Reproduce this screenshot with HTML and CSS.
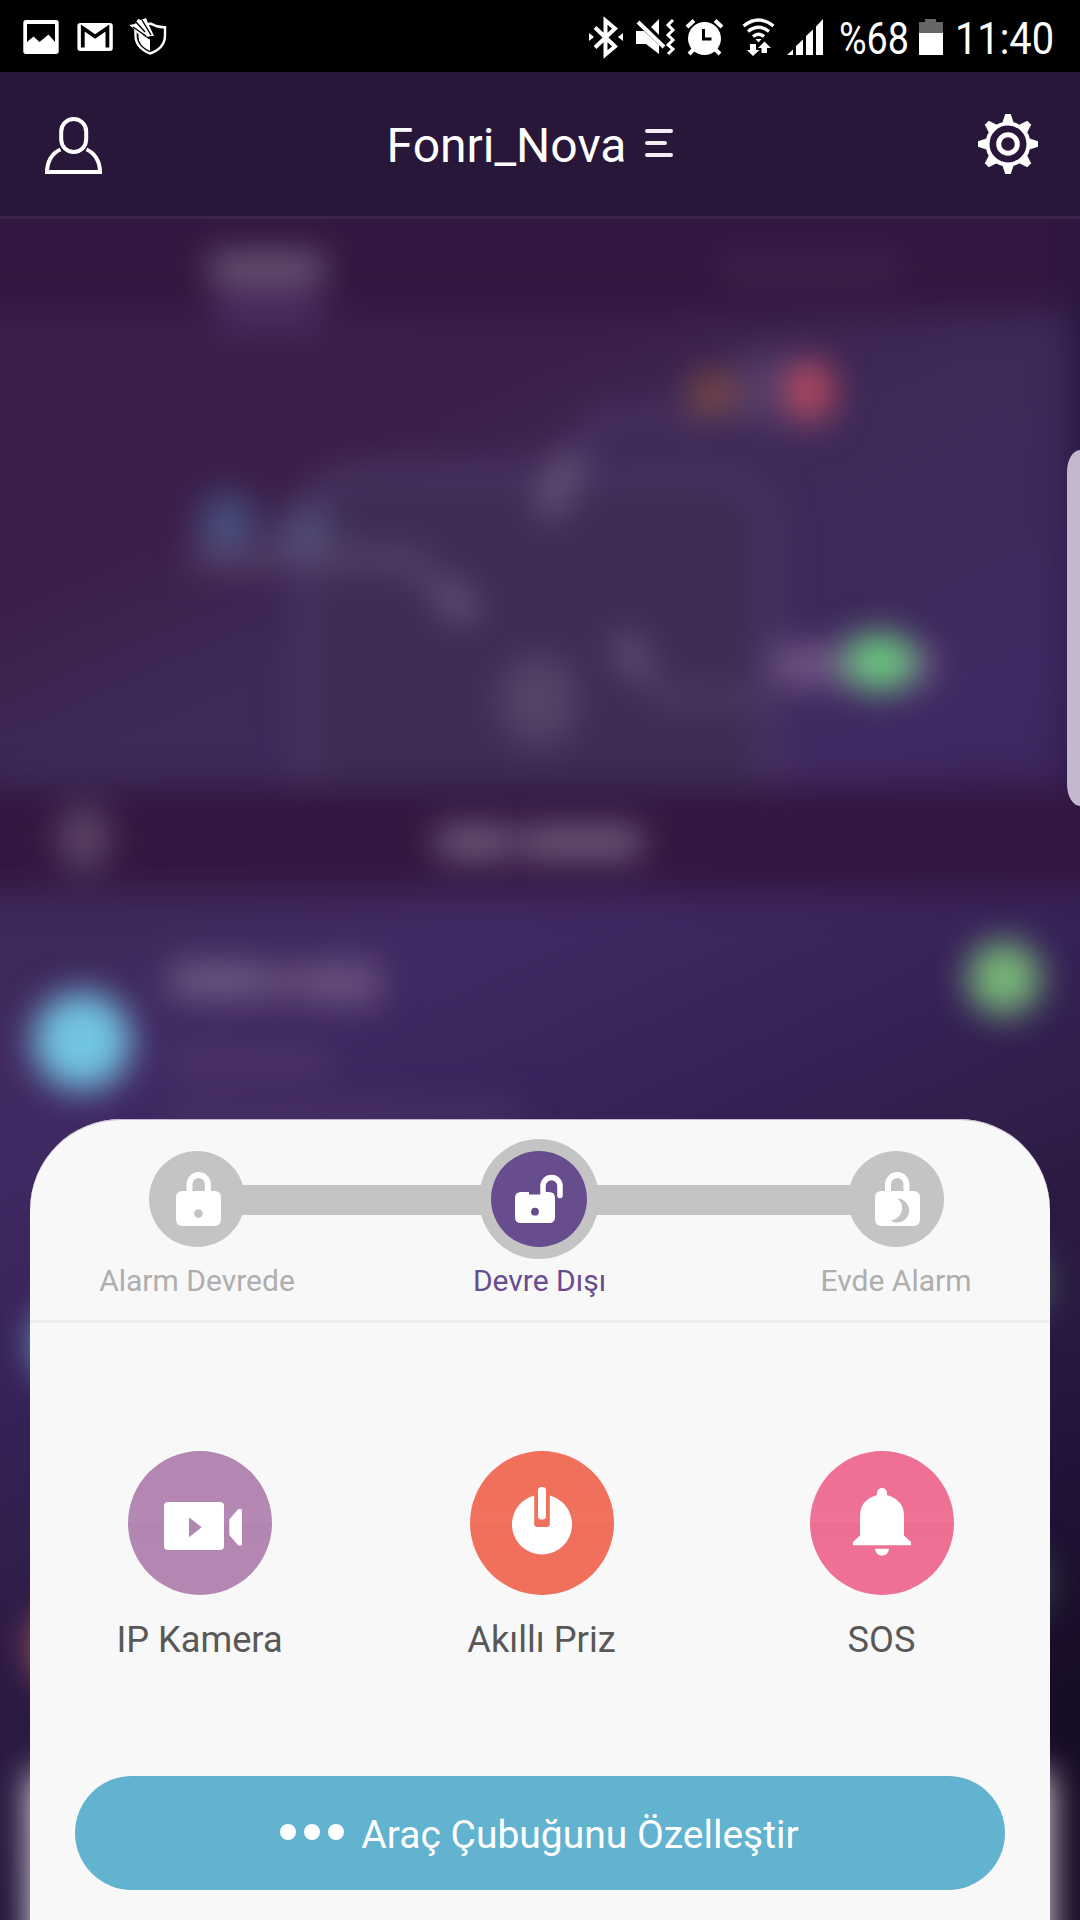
FILE: index.html
```html
<!DOCTYPE html>
<html lang="tr">
<head>
<meta charset="utf-8">
<meta name="viewport" content="width=1080">
<title>Fonri_Nova</title>
<link rel="stylesheet" href="styles.css">
</head>
<body>
<div class="screen">
  <header class="status">
    <div class="status-left">
      <svg class="ic" width="36" height="36" viewBox="23 19 36 36"><path fill-rule="evenodd" d="M26 20h30q2.700 0 2.700 2.700v28.600q0 2.700-2.700 2.700h-30q-2.700 0-2.700-2.700v-28.600q0-2.700 2.700-2.700zM27 24v18l6.500-5.500 6 5.500 9-7.500 6.500 7.500v-18z"/></svg>
      <svg class="ic" width="36" height="36" viewBox="77 19 36 36"><rect x="77.400" y="23" width="35.400" height="28" rx="3"/><path d="M82.800 47.500V28l12.300 8.500 12.300-8.500v19.500" fill="none" stroke="#000" stroke-width="3.800"/></svg>
      <svg class="ic shield" width="40" height="40" viewBox="128 17 40 40"><path d="M135.500 27q8 0 14.500-3.500 3 1 6 2.500 4 1.300 9 1.200v8q0 13-15 18.300-14.500-6-14.500-18z" fill="#000" stroke="#fff" stroke-width="2.400"/><path d="M138.500 30q7 0 11.500-3v24q-11.500-5.500-11.500-14z"/><path d="M130 23l21 14M140 18l13 20" fill="none" stroke="#000" stroke-width="6"/><path d="M129 25l6-1 3-5 3 1 5-2 2 5 6 13-4 0-2 1-5-2-5-1-5-6z"/><path d="M133 27l13 9M142 20l9 15M136 22l9 10" fill="none" stroke="#000" stroke-width="1.400"/></svg>
    </div>
    <div class="status-right">
      <svg class="ic bt" width="34" height="40" viewBox="589 17 34 40"><path d="M595 27.500l20 19-9.500 8v-34l9.500 8-20 19" fill="none" stroke="#fff" stroke-width="4"/><path d="M589 33l5 4-5 4zM623 33l-5 4 5 4z"/></svg>
      <svg class="ic mute" width="40" height="40" viewBox="636 17 40 40"><path d="M636 31h8l15 14v9l-13-10h-10zM659 19v16l-8-8z"/><path d="M638 22l26 25" fill="none" stroke="#fff" stroke-width="4"/><path d="M673 20l-5 5 5 5-5 5 5 5-5 5 5 4-5 5" fill="none" stroke="#fff" stroke-width="3"/></svg>
      <svg class="ic alarm" width="37" height="40" viewBox="686 17 37 40"><circle cx="704.500" cy="38.500" r="16.500"/><path d="M687 27l7-6.500M722 27l-7-6.500M689 54l6-6M720 54l-6-6" stroke="#fff" stroke-width="4" fill="none"/><path d="M703.500 29v10h8" stroke="#000" stroke-width="3" fill="none"/></svg>
      <svg class="ic wifi" width="34" height="40" viewBox="742 17 34 40"><path d="M743.500 26q15-12 30 0M748 31.500q10.500-8.500 21 0M753 36.500q5.500-4.500 11 0" fill="none" stroke="#fff" stroke-width="3.200"/><path d="M755.500 39h6l-3 3.500zM750 44h6v6h3.500l-6.500 6-6-6h3zM761.500 53v-5h-3.500l6.500-6.500 6.500 6.500h-4v5z"/></svg>
      <svg class="ic signal" width="37" height="40" viewBox="787 17 37 40"><path d="M787 55l6-5.500v5.500zM796 55v-9l7-6.500v15.500zM806 55v-19l7-6.500v25.500zM816 55v-28.500l7-7.500v36z"/></svg>
      <svg class="ic pct" width="72" height="72" viewBox="838 0 72 72"><text class="status-text" x="839" y="54" textLength="70" lengthAdjust="spacingAndGlyphs">%68</text></svg>
      <svg class="ic battery" width="24" height="40" viewBox="919 17 24 40"><path d="M919 33v-11h6v-3h11v3h7v11z" fill="#666"/><path d="M919 33h24v22h-24z"/></svg>
      <svg class="ic clock" width="102" height="72" viewBox="953 0 102 72"><text class="status-text" x="955" y="54" textLength="99" lengthAdjust="spacingAndGlyphs">11:40</text></svg>
    </div>
  </header>

  <nav class="topbar">
    <svg class="ic person" width="58" height="58" viewBox="45 117 58 58"><g fill="none" stroke="#fff" stroke-width="4"><rect x="61.200" y="119" width="25" height="33" rx="12.500"/><path d="M60.500 149.500C52 153 47 162 47 172H100C100 162 95 153 86.500 149.500"/></g></svg>
    <div class="title"><span>Fonri_Nova</span><span class="menu"><i></i><i></i><i></i></span></div>
    <svg class="ic" width="60" height="60" viewBox="-30 -30 60 60"><defs><path id="tooth" d="M-6-20L-2.800-30H2.800L6-20z"/></defs><circle r="20.500" fill="none" stroke="#fff" stroke-width="4"/><circle r="9.300" fill="none" stroke="#fff" stroke-width="5"/><use href="#tooth"/><use href="#tooth" transform="rotate(45)"/><use href="#tooth" transform="rotate(90)"/><use href="#tooth" transform="rotate(135)"/><use href="#tooth" transform="rotate(180)"/><use href="#tooth" transform="rotate(225)"/><use href="#tooth" transform="rotate(270)"/><use href="#tooth" transform="rotate(315)"/></svg>
  </nav>

  <main class="content">
    <svg class="backdrop" width="1080" height="1701" viewBox="0 219 1080 1701" aria-hidden="true">
      <defs>
        <linearGradient id="dusk" gradientUnits="userSpaceOnUse" x1="0" y1="0" x2="898" y2="1996">
          <stop offset="0.140" stop-color="#3c204a"/><stop offset="0.250" stop-color="#3b1f4a"/><stop offset="0.330" stop-color="#3e2a58"/><stop offset="0.410" stop-color="#3f295c"/><stop offset="0.470" stop-color="#412963"/><stop offset="0.530" stop-color="#3d255e"/><stop offset="0.590" stop-color="#362158"/><stop offset="0.645" stop-color="#321f4c"/><stop offset="0.690" stop-color="#2d1a44"/><stop offset="0.750" stop-color="#2a1941"/><stop offset="0.810" stop-color="#211338"/><stop offset="0.900" stop-color="#180d26"/>
        </linearGradient>
        <filter id="soft" filterUnits="userSpaceOnUse" x="-60" y="150" width="1200" height="1850" color-interpolation-filters="sRGB"><feGaussianBlur stdDeviation="17"/></filter>
      </defs>
      <rect y="219" width="1080" height="1701" fill="url(#dusk)"/>
      <g filter="url(#soft)">
        <rect x="-60" y="100" width="1200" height="212" fill="#321740"/>
        <rect x="1070" y="219" width="60" height="580" fill="#291640"/>
        <rect x="210" y="252" width="114" height="34" fill="#6c5676"/>
        <rect x="218" y="296" width="102" height="32" fill="#4d2e64"/>
        <rect x="722" y="256" width="176" height="26" fill="#3f254d"/>
        <path d="M305 800V535q0-60 60-60h345q60 0 60 60v265z" fill="#3e2c55" stroke="#4a3562" stroke-width="20"/>
        <rect x="736" y="355" width="90" height="70" fill="#523c68"/>
        <path d="M720 420H605L575 455L548 505" fill="none" stroke="#4b3763" stroke-width="18"/>
        <path d="M572 455L546 516" stroke="#6b577e" stroke-width="26"/>
        <path d="M190 558H410L465 615" fill="none" stroke="#58426b" stroke-width="22"/>
        <path d="M450 587L468 620" stroke="#6b577e" stroke-width="26"/>
        <path d="M625 645L665 698H770" fill="none" stroke="#503a65" stroke-width="20"/>
        <path d="M620 638L642 672" stroke="#6b577e" stroke-width="24"/>
        <ellipse cx="538" cy="700" rx="41" ry="46" fill="#544267"/>
        <rect x="688" y="374" width="50" height="38" rx="16" fill="#7c4a42"/>
        <ellipse cx="810" cy="391" rx="25" ry="30" fill="#b6495f"/>
        <circle cx="227" cy="522" r="28" fill="#475281"/>
        <ellipse cx="305" cy="533" rx="26" ry="26" fill="#514f77"/>
        <rect x="770" y="645" width="165" height="40" rx="20" fill="#705786"/>
        <ellipse cx="880" cy="662" rx="36" ry="29" fill="#6dcb82"/>
        <rect x="-60" y="787" width="1200" height="104" fill="#321740"/>
        <ellipse cx="84" cy="838" rx="27" ry="35" fill="#5b4365"/>
        <rect x="437" y="827" width="76" height="31" fill="#766080"/><rect x="523" y="827" width="118" height="31" fill="#766080"/>
        <circle cx="82" cy="1041" r="49" fill="#72c6e2"/>
        <rect x="170" y="963" width="90" height="35" fill="#705b84"/><rect x="260" y="967" width="50" height="30" fill="#675179"/><rect x="310" y="963" width="70" height="40" fill="#6a547f"/>
        <rect x="170" y="1050" width="160" height="24" fill="#4e366b"/>
        <rect x="170" y="1104" width="350" height="24" fill="#4a3268"/>
        <circle cx="1004" cy="978" r="37" fill="#78b878"/>
        <circle cx="74" cy="1344" r="42" fill="#71a6c4"/><circle cx="74" cy="1648" r="42" fill="#b86566"/>
        <circle cx="1016" cy="1283" r="32" fill="#4a6560"/><circle cx="1016" cy="1583" r="32" fill="#3e554f"/>
        <rect x="30" y="1772" width="1020" height="240" fill="#e6e1e9"/>
      </g>
    </svg>
    <div class="edge-handle"></div>

    <section class="sheet">
      <div class="modes">
        <div class="mode">
          <div class="node"><svg class="ic" width="96" height="96" viewBox="149 1151 96 96"><path d="M189.500 1195v-10.500a9 9.300 0 0 1 18.400 0V1195" fill="none" stroke="#fff" stroke-width="6"/><rect x="176" y="1191" width="45" height="35" rx="6"/><circle cx="198.400" cy="1213.500" r="4.300" fill="#c4c4c4"/></svg></div>
          <span>Alarm Devrede</span>
        </div>
        <div class="mode active">
          <div class="node"><svg class="ic" width="96" height="96" viewBox="491 1151 96 96"><path d="M543 1196v-10a8.500 8.500 0 0 1 17 0v9.500" fill="none" stroke="#fff" stroke-width="5.500" stroke-linecap="round"/><path d="M521 1192h8v2.500h12V1192h8q6 0 6 6v19q0 6-6 6h-28q-6 0-6-6v-19q0-6 6-6z"/><circle cx="535" cy="1211.700" r="3.900" fill="#674c8e"/></svg></div>
          <span>Devre Dışı</span>
        </div>
        <div class="mode">
          <div class="node"><svg class="ic" width="96" height="96" viewBox="848 1151 96 96"><path d="M888 1195v-10.500a9 9.300 0 0 1 18.400 0V1195" fill="none" stroke="#fff" stroke-width="6"/><rect x="875" y="1191" width="45" height="35" rx="6"/><path d="M897 1198.500a12 12 0 1 1-6.500 22c13-2 15-17 6.500-22z" fill="#c4c4c4"/></svg></div>
          <span>Evde Alarm</span>
        </div>
      </div>

      <div class="actions">
        <div class="action camera">
          <div class="disc"><svg class="ic" width="144" height="144" viewBox="128 1451 144 144"><path fill-rule="evenodd" d="M168 1502h52q4 0 4 4v40q0 4-4 4h-52q-4 0-4-4v-40q0-4 4-4zM189 1517.300v20l12.700-10z"/><path d="M229.300 1519.500l8.500-10q4-2 4.200 1.500v32.500q-.2 3.500-4.200 1.500l-8.500-10z"/></svg></div>
          <span>IP Kamera</span>
        </div>
        <div class="action plug">
          <div class="disc"><svg class="ic" width="144" height="144" viewBox="470 1451 144 144"><path d="M534.200 1495.500V1524q0 3 3 3h9.600q3 0 3-3V1495.500a30 30 0 1 1-15.600 0z"/><rect x="538" y="1487" width="8" height="32.500" rx="3.500"/></svg></div>
          <span>Akıllı Priz</span>
        </div>
        <div class="action sos">
          <div class="disc"><svg class="ic" width="144" height="144" viewBox="810 1451 144 144"><path d="M877 1495v-2a5 5 0 0 1 10 0v2q17 5 17 21v19.500l7 6.500v3.300h-58v-3.300l7-6.500V1516q0-16 17-21zM875 1548.700h14a7 7 0 0 1-14 0z"/></svg></div>
          <span>SOS</span>
        </div>
      </div>

      <button class="customize" type="button"><span class="dots"><i></i><i></i><i></i></span><span>Araç Çubuğunu Özelleştir</span></button>
    </section>
  </main>
</div>
</body>
</html>
```
FILE: styles.css
```css
* { box-sizing: border-box; }
body { margin: 0; font-family: Roboto, "Noto Sans", sans-serif; background: #180d26; }
.screen { width: 1080px; height: 1920px; overflow: hidden; display: flex; flex-direction: column; }
.ic { display: block; fill: #fff; flex: none; overflow: visible; }

/* System status bar */
.status { height: 72px; flex: none; background: #000; display: flex; justify-content: space-between; align-items: center; padding: 0 25px 0 23px; }
.status-left, .status-right { display: flex; align-items: center; }
.status-left { gap: 18px; }
.status-left .ic { margin-top: 2px; }
.status-right .ic { margin-top: 1px; }
.shield { margin-left: -3px; }
.mute { margin-left: 13px; }
.alarm { margin-left: 10px; }
.wifi { margin-left: 19px; }
.signal { margin-left: 11px; }
.pct { margin-left: 14px; }
.battery { margin-left: 9px; }
.clock { margin-left: 10px; }
.status-right .pct, .status-right .clock { margin-top: 0; }
.status-text { font-family: Roboto, sans-serif; font-size: 45px; fill: #fff; }

/* App bar */
.topbar { height: 147px; flex: none; background: #281739; border-bottom: 3px solid #3b254b; display: flex; align-items: center; justify-content: space-between; padding: 0 42px 0 45px; }
.person { margin-top: 4px; }
.title { display: flex; align-items: center; gap: 19px; color: #fff; font-size: 48px; line-height: 56px; margin-right: 21px; }
.title span:first-child { padding-top: 3px; }
.menu { display: flex; flex-direction: column; gap: 8px; margin-top: -2px; }
.menu i { width: 28px; height: 4px; border-radius: 2px; background: #f1edf1; }
.menu i:nth-child(2) { width: 22px; }

/* Blurred page behind the sheet */
.content { flex: 1; position: relative; padding: 900px 30px 0; }
.backdrop { position: absolute; left: 0; top: 0; display: block; }
.edge-handle { position: absolute; right: 0; top: 231px; width: 13px; height: 356px; border-radius: 13px 0 0 13px / 22px 0 0 22px; background: #c3b8cd; }

/* Bottom sheet */
.sheet { position: relative; height: 801px; background: #f8f8f8; border-radius: 91px 91px 0 0; box-shadow: inset 0 1px 0 0 #c3b8cd; }
.modes { height: 204px; padding-top: 32px; display: grid; grid-template-columns: 334px 351px 335px; border-bottom: 3px solid #ededed; position: relative; }
.modes::before { content: ""; position: absolute; left: 167px; top: 66px; width: 699px; height: 30px; background: #c4c4c4; }
.mode { position: relative; display: flex; flex-direction: column; align-items: center; color: #aeaeae; font-size: 30px; line-height: 36px; }
.mode:last-child { padding-left: 27px; }
.node { width: 96px; height: 96px; border-radius: 50%; background: #c4c4c4; margin-bottom: 16px; }
.active { color: #674c8e; }
.active .node { background: #674c8e; box-shadow: 0 0 0 12px #c4c4c4; margin-right: 1px; }

.actions { padding-top: 128px; display: grid; grid-template-columns: 340px 344px 336px; }
.action { display: flex; flex-direction: column; align-items: center; color: #585858; font-size: 36.200px; line-height: 42px; }
.action span { margin-left: -1px; }
.disc { width: 144px; height: 144px; border-radius: 50%; margin-bottom: 24px; }
.camera .disc { background: linear-gradient(#b486b2 35%, #b688b4 50%, #b284b0 50%, #b486b2 65%); }
.plug .disc { background: linear-gradient(#f0705c 35%, #f1735f 50%, #ee6f5b 50%, #f0705c 65%); }
.sos .disc { background: linear-gradient(#ee7095 35%, #ef7498 50%, #ec6d92 50%, #ee7095 65%); }

.customize { margin: 115px 45px 0; width: 930px; height: 114px; border: 0; border-radius: 57px; background: #61b3d0; color: #fff; font: 39px/44px Roboto, "Noto Sans", sans-serif; display: flex; justify-content: center; align-items: center; gap: 17px; padding: 3px 1px 0 0; }
.dots { display: flex; gap: 8px; margin-top: -5px; }
.dots i { width: 16px; height: 16px; border-radius: 50%; background: #fff; }
```
